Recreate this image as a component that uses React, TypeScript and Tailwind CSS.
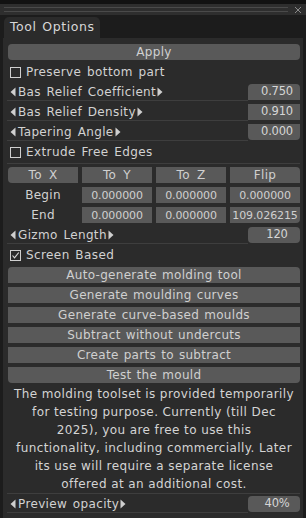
import React from "react";

const LeftTri = () => (
  <svg width="6" height="10" viewBox="0 0 6 10" className="shrink-0">
    <polygon points="5.5,0.5 5.5,9.5 0.5,5" fill="#cfcfcf" />
  </svg>
);
const RightTri = () => (
  <svg width="6" height="10" viewBox="0 0 6 10" className="shrink-0">
    <polygon points="0.5,0.5 0.5,9.5 5.5,5" fill="#cfcfcf" />
  </svg>
);

function Checkbox({ checked, label }: { checked?: boolean; label: string }) {
  return (
    <div className="h-[20px] flex items-center pl-[2px]">
      <div className="w-[11px] h-[11px] border border-[#cfcfcf] flex items-center justify-center">
        {checked && (
          <svg width="9" height="9" viewBox="0 0 9 9">
            <polyline points="1.5,4.5 3.5,6.8 7.8,1.5" fill="none" stroke="#d8d8d8" strokeWidth="1.1" />
          </svg>
        )}
      </div>
      <span className="ml-[5px] tracking-[0.4px] [word-spacing:1.5px]">{label}</span>
    </div>
  );
}

function Slider({ label, value, round }: { label: string; value: string; round: string }) {
  return (
    <div className="h-[20px] py-[2px] flex">
      <div className="flex-1 h-[17px] border-b border-[#3e3e3e] flex items-center pl-[3px] -ml-px">
        <LeftTri />
        <span className="ml-[2px] mr-[1px] tracking-[0.35px] [word-spacing:1.5px]">{label}</span>
        <RightTri />
      </div>
      <div className={`w-[52px] h-[16px] bg-[#595959] flex items-center justify-center pl-[6px] text-[#d6d6d6] text-[11.5px] tracking-[-0.2px] ${round}`}>
        {value}
      </div>
    </div>
  );
}

export default function App() {
  const btn = "h-[16px] bg-[#595959] flex items-center justify-center text-[#d0d0d0]";
  const num = "h-[16px] bg-[#595959] flex items-center justify-center text-[#d0d0d0] text-[11px] tracking-[-0.1px]";
  return (
    <div className="w-[306px] h-[518px] bg-[#1c1c1c] overflow-hidden flex flex-col font-['DejaVu_Sans',sans-serif] text-[12px] leading-none text-[#d2d2d2] tracking-[0.3px]">
      <div className="h-[4px] bg-[#121212]" />
      <div className="h-[11px] bg-[#2e2e2e] flex items-center pl-[4px] pr-[2px]">
        <div className="flex-1 flex flex-col gap-[3px] pr-[6px]">
          <div className="h-px bg-[#4a4a4a]" />
          <div className="h-px bg-[#4a4a4a]" />
        </div>
        <svg width="8" height="8" viewBox="0 0 8 8" className="mr-[2px]">
          <path d="M1 1L7 7M7 1L1 7" stroke="#8a8a8a" strokeWidth="1" />
        </svg>
      </div>
      <div className="h-[2px]" />
      <div className="flex px-[4px]">
        <div className="h-[21px] w-[96px] bg-[#2b2b2b] rounded-t-[5px] flex items-center pl-[6px] text-[#d8d8d8] text-[12.5px] tracking-[0.6px] [word-spacing:1px]">
          Tool Options
        </div>
      </div>
      <div className="flex-1 mx-[3px] bg-[#2b2b2b] pl-[5px] pr-[3px] pt-[4px] flex flex-col">
        <div className="h-[20px] py-[2px]">
          <div className={`${btn} rounded-[4px]`}>Apply</div>
        </div>
        <Checkbox label="Preserve bottom part" />
        <Slider label="Bas Relief Coefficient" value="0.750" round="rounded-t-[4px]" />
        <Slider label="Bas Relief Density" value="0.910" round="" />
        <Slider label="Tapering Angle" value="0.000" round="rounded-b-[4px]" />
        <Checkbox label="Extrude Free Edges" />
        <div className="h-[3px] flex items-center -ml-px">
          <div className="h-px w-full bg-[#3e3e3e]" />
        </div>
        <div className="h-[20px] py-[2px] grid grid-cols-4 gap-x-[4px] [word-spacing:3px]">
          <div className={`${btn} rounded-l-[4px]`}>To X</div>
          <div className={btn}>To Y</div>
          <div className={btn}>To Z</div>
          <div className={`${btn} rounded-tr-[4px]`}>Flip</div>
        </div>
        <div className="h-[20px] py-[2px] grid grid-cols-4 gap-x-[4px]">
          <div className="flex items-center justify-center">Begin</div>
          <div className={num}>0.000000</div>
          <div className={num}>0.000000</div>
          <div className={num}>0.000000</div>
        </div>
        <div className="h-[20px] py-[2px] grid grid-cols-4 gap-x-[4px]">
          <div className="flex items-center justify-center">End</div>
          <div className={num}>0.000000</div>
          <div className={num}>0.000000</div>
          <div className={`${num} rounded-br-[4px]`}>109.026215</div>
        </div>
        <Slider label="Gizmo Length" value="120" round="rounded-[4px]" />
        <Checkbox checked label="Screen Based" />
        <div className="flex flex-col gap-[4px] py-[2px] [word-spacing:1px]">
          <div className={`${btn} rounded-t-[4px]`}>Auto-generate molding tool</div>
          <div className={btn}>Generate moulding curves</div>
          <div className={btn}>Generate curve-based moulds</div>
          <div className={btn}>Subtract without undercuts</div>
          <div className={btn}>Create parts to subtract</div>
          <div className={`${btn} rounded-b-[4px]`}>Test the mould</div>
        </div>
        <div className="h-[108px] text-center leading-[18px] text-[#d4d4d4] tracking-[0.4px]">
          The molding toolset is provided temporarily
          <br />
          for testing purpose. Currently (till Dec
          <br />
          2025), you are free to use this
          <br />
          functionality, including commercially. Later
          <br />
          its use will require a separate license
          <br />
          offered at an additional cost.
        </div>
        <div className="border-t border-[#3e3e3e] -ml-px pl-px">
          <Slider label="Preview opacity" value="40%" round="rounded-[4px]" />
        </div>
      </div>
    </div>
  );
}
